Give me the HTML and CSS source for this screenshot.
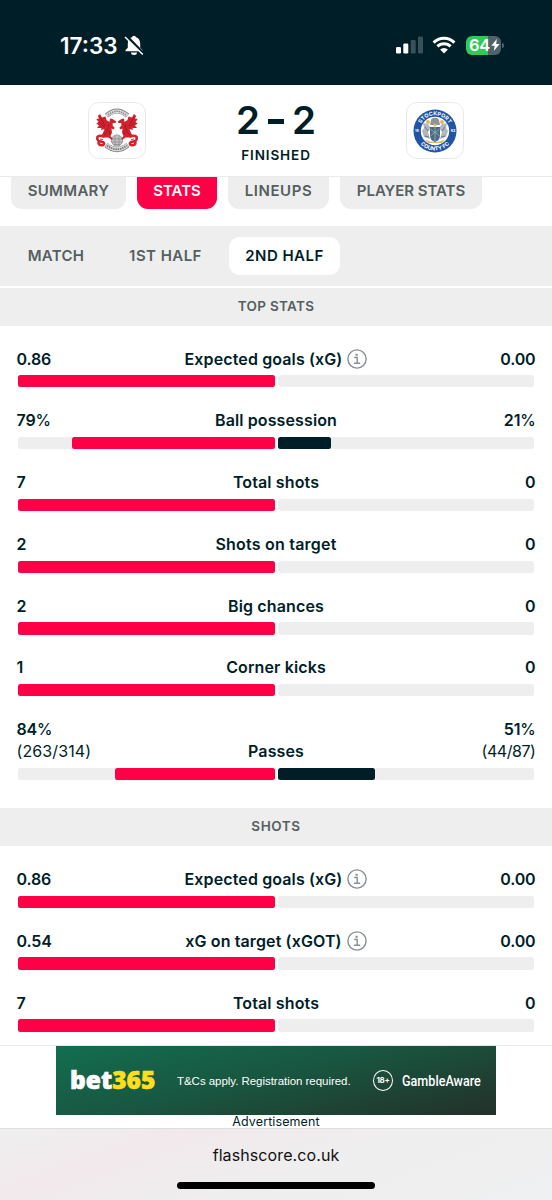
FILE: index.html
```
<!DOCTYPE html>
<html lang="en">
<head>
<meta charset="utf-8">
<title>Match stats</title>
<link rel="stylesheet" href="styles.css">
</head>
<body>
<div class="screen">
  <header class="status">
    <div class="clock"><span class="time">17:33</span>
      <svg class="bell" width="20" height="21" viewBox="0 0 20 21"><path d="M1.500 16.300V15l2.300-2.300V8.800C3.800 5.300 5.500 3 7.900 2.300a2.200 2.200 0 0 1 4.200 0C14.500 3 16.200 5.300 16.200 8.800v3.900l2.300 2.300v1.300zM7 17.600h6a3 2.500 0 0 1-6 0z" fill="#fff"/><path d="M2 .8l17.400 17.800" stroke="#001e28" stroke-width="3.200"/><path d="M1 2l17.800 17.500" stroke="#fff" stroke-width="1.500"/></svg>
    </div>
    <div class="indicators">
      <svg class="signal" width="28" height="18" viewBox="0 0 28 18"><g fill="#fff"><rect x="0" y="11" width="5" height="6.500" rx="1.300"/><rect x="7.300" y="7.500" width="5" height="10" rx="1.300"/><g opacity=".22"><rect x="14.700" y="4" width="5" height="13.500" rx="1.300"/><rect x="22" y="0.500" width="5" height="17" rx="1.300"/></g></g></svg>
      <svg class="wifi" width="24" height="18" viewBox="0 0 24 18"><g fill="none" stroke="#fff" stroke-width="3"><path d="M1.600 6.600a14.700 14.700 0 0 1 20.800 0"/><path d="M5.400 10.400a9.300 9.300 0 0 1 13.200 0"/></g><path d="M12 17.500l-3.900-3.900a5.600 5.600 0 0 1 7.800 0z" fill="#fff"/></svg>
      <div class="battery"><span>64</span><svg width="9" height="12" viewBox="0 0 9 12"><path d="M5.800 0L.4 6.700h3.300L2.800 12 8.600 4.900H5.200z" fill="#fff"/></svg><i class="nub"></i></div>
    </div>
  </header>

  <section class="match">
    <div class="crest">
      <svg width="46" height="46" viewBox="0 0 46 46">
        <path d="M12.500 7.500Q23-1.500 33.500 7.500" fill="none" stroke="#888" stroke-width="5"/>
        <path d="M13 7.500Q23-1 33 7.500" fill="none" stroke="#e2e2e2" stroke-width="3.600"/>
        <path d="M14 7Q23-.5 32 7" fill="none" stroke="#888" stroke-width="1.600" stroke-dasharray="1.500 .8"/>
        <path d="M12 37Q23 46 34 37" fill="none" stroke="#888" stroke-width="5.200"/>
        <path d="M12.500 37Q23 45.500 33.500 37" fill="none" stroke="#ddd" stroke-width="3.800"/>
        <path d="M13 37.500Q23 45 33 37.500" fill="none" stroke="#777" stroke-width="1.800" stroke-dasharray="1.500 .8"/>
        <circle cx="23" cy="32.500" r="5.600" fill="#c4c4c4" stroke="#888" stroke-width=".8"/>
        <path d="M18 31h10M17.800 34h10.400M20 36.500h6M21 28v9M25 28v9" stroke="#888" stroke-width=".7"/>
        <g id="dragon">
          <path d="M6 6L8 9.500 11.500 8.500 12.500 12 15.500 14 16 10.500 18.500 11 22.300 13.500 21.500 15 18.800 15 18.500 17.500 20.500 19.500 20 21.500 17.500 20.500 18 24.500 16.500 28 18.500 30.500 18 32 14.500 29.500 10.500 29.500 6.500 28.500 9 25 10.500 21 7 22 7.500 20 3 20 5 17.500 2.300 15.500 4.500 14 2.300 11 5 10.500 3.800 8z" fill="#d3222e"/>
          <path d="M9.500 28.500C5 27 2.500 28 3.500 31.500S9 32.500 10 35 5.500 38.500 4.500 35" fill="none" stroke="#d3222e" stroke-width="2.600" stroke-linecap="round"/>
          <path d="M6.500 9.500L11 18M5 14l5.500 5M14.500 16.500c1.500 4-3 8-4 11M15 23l1 4M6 31l3 .5" fill="none" stroke="#8d1a23" stroke-width=".8"/>
        </g>
        <use href="#dragon" transform="matrix(-1 0 0 1 46 0)"/>
      </svg>
    </div>
    <div class="result">
      <div class="score"><span>2</span><i class="dash"></i><span>2</span></div>
      <div class="state">FINISHED</div>
    </div>
    <div class="crest">
      <svg width="46" height="46" viewBox="0 0 46 46">
        <defs><path id="arcTop" d="M7.400 23a15.600 15.600 0 0 1 31.200 0"/><path id="arcBottom" d="M3.500 23a19.500 19.500 0 0 0 39 0"/></defs>
        <circle cx="23" cy="23" r="21.500" fill="#2055a4"/>
        <circle cx="23" cy="23" r="14.200" fill="#fff"/>
        <g fill="#b4b6be"><path d="M11 15l5 1 3 4-3 4 2 7-6-2-2-6 2-3z"/><path d="M35 15l-5 1-3 4 3 4-2 7 6-2 2-6-2-3z"/></g>
        <path d="M18 19h10v8c0 4-2 6-5 7-3-1-5-3-5-7z" fill="#466c8c"/>
        <path d="M18.500 21l4.500 4 4.500-4M18.500 28l4.500-4 4.500 4M23 19v14" stroke="#9fae90" stroke-width=".9" fill="none"/>
        <path d="M19 12c1-3 7-3 8 0l1 5H18z" fill="#8d939c"/>
        <g fill="#dbb862"><circle cx="16" cy="14" r="2"/><circle cx="30" cy="14" r="2"/><path d="M13 31.500q10 5 20 0l-3 3.500H16z"/><circle cx="23" cy="17" r="1.500"/></g>
        <path d="M13 19l3 4M33 19l-3 4M13 28l4 1M33 28l-4 1" stroke="#77747d" stroke-width="1"/>
        <g class="ring"><text><textPath href="#arcTop" startOffset="50%">STOCKPORT</textPath></text><text><textPath href="#arcBottom" startOffset="50%">COUNTY FC</textPath></text><text class="year" x="5" y="24.300">18</text><text class="year" x="41" y="24.300">83</text></g>
      </svg>
    </div>
  </section>

  <nav class="tabs"><span class="tab summary">SUMMARY</span><span class="tab stats">STATS</span><span class="tab lineups">LINEUPS</span><span class="tab players">PLAYER STATS</span></nav>
  <nav class="periods"><span class="period full">MATCH</span><span class="period first">1ST HALF</span><span class="period second">2ND HALF</span></nav>

  <main class="content">
    <h2>TOP STATS</h2>
    <div class="row"><div class="line"><b>0.86</b><strong class="xg">Expected goals (xG) <svg class="info" viewBox="0 0 20 20"><circle cx="10" cy="10" r="9.100"/><path d="M7.200 8.500h3v5.700M7 14.200h6.200"/><path class="dot" d="M8.500 4.800h2.200v2H8.500z"/></svg></strong><b>0.00</b></div><div class="bars"><div><i style="width:100%"></i></div><div></div></div></div>
    <div class="row"><div class="line"><b>79<span class="pct">%</span></b><strong>Ball possession</strong><b>21<span class="pct">%</span></b></div><div class="bars"><div><i style="width:79%"></i></div><div><i style="width:21%"></i></div></div></div>
    <div class="row"><div class="line"><b>7</b><strong>Total shots</strong><b>0</b></div><div class="bars"><div><i style="width:100%"></i></div><div></div></div></div>
    <div class="row"><div class="line"><b>2</b><strong class="wide">Shots on target</strong><b>0</b></div><div class="bars"><div><i style="width:100%"></i></div><div></div></div></div>
    <div class="row"><div class="line"><b>2</b><strong>Big chances</strong><b>0</b></div><div class="bars"><div><i style="width:100%"></i></div><div></div></div></div>
    <div class="row"><div class="line"><b>1</b><strong>Corner kicks</strong><b>0</b></div><div class="bars"><div><i style="width:100%"></i></div><div></div></div></div>
    <div class="row passes"><div class="line"><b>84<span class="pct">%</span><small>(263/314)</small></b><strong>Passes</strong><b>51<span class="pct">%</span><small class="tight">(44/87)</small></b></div><div class="bars"><div><i style="width:62.200%"></i></div><div><i style="width:38%"></i></div></div></div>
    <h2>SHOTS</h2>
    <div class="row"><div class="line"><b>0.86</b><strong class="xg">Expected goals (xG) <svg class="info" viewBox="0 0 20 20"><circle cx="10" cy="10" r="9.100"/><path d="M7.200 8.500h3v5.700M7 14.200h6.200"/><path class="dot" d="M8.500 4.800h2.200v2H8.500z"/></svg></strong><b>0.00</b></div><div class="bars"><div><i style="width:100%"></i></div><div></div></div></div>
    <div class="row"><div class="line"><b>0.54</b><strong class="xg">xG on target (xGOT) <svg class="info" viewBox="0 0 20 20"><circle cx="10" cy="10" r="9.100"/><path d="M7.200 8.500h3v5.700M7 14.200h6.200"/><path class="dot" d="M8.500 4.800h2.200v2H8.500z"/></svg></strong><b>0.00</b></div><div class="bars"><div><i style="width:100%"></i></div><div></div></div></div>
    <div class="row"><div class="line"><b>7</b><strong>Total shots</strong><b>0</b></div><div class="bars"><div><i style="width:100%"></i></div><div></div></div></div>
  </main>

  <aside class="ad">
    <div class="banner"><span class="brand">bet<em>365</em></span><span class="terms">T&amp;Cs apply. Registration required.</span><span class="age">18+</span><span class="aware">GambleAware</span></div>
    <div class="caption">Advertisement</div>
  </aside>
  <footer class="browser"><span class="address">flashscore.co.uk</span><i class="home"></i></footer>
</div>
</body>
</html>
```
FILE: styles.css
```
* { box-sizing: border-box; }
body { margin: 0; background: #fff; color: #001e28; font-family: Inter, "Liberation Sans", sans-serif; }
.screen { width: 552px; height: 1200px; display: flex; flex-direction: column; overflow: hidden; }
.screen > * { flex-shrink: 0; }
i, em { font-style: normal; }
svg { display: block; }

.status { height: 85px; background: #001e28; color: #fff; display: flex; justify-content: space-between; padding: 33px 51px 0 60px; }
.clock { display: flex; height: 24px; align-items: center; }
.time { width: 64px; font-size: 22.500px; font-weight: 600; letter-spacing: 0; white-space: nowrap; }
.indicators { display: flex; height: 24px; align-items: center; }
.signal { margin-right: 8px; }
.wifi { margin-right: 10px; }
.battery { position: relative; width: 35px; height: 19px; border-radius: 6px; background: linear-gradient(90deg, #34c759 64%, #4e626a 64%); display: flex; align-items: center; padding-left: 3px; font-size: 16.500px; font-weight: 600; letter-spacing: -.3px; }
.battery svg { margin-left: 1px; }
.nub { position: absolute; right: -3px; top: 7px; width: 2px; height: 5px; border-radius: 0 2px 2px 0; background: #4e626a; }

.match { height: 92px; border-bottom: 1px solid #e9eaec; display: flex; justify-content: space-between; padding: 17px 88px 0; }
.crest { width: 58px; height: 57px; border: 1px solid #e8eaec; border-radius: 11px; display: flex; align-items: center; justify-content: center; }
.result { text-align: center; }
.score { display: flex; align-items: center; justify-content: center; height: 36px; font-size: 38.500px; font-weight: 600; line-height: 36px; }
.dash { width: 16px; height: 5px; background: #001e28; margin: 2px 8px 0; }
.state { margin-top: 8px; font-size: 13.500px; line-height: 18px; font-weight: 600; letter-spacing: .9px; }
.ring { fill: #fff; font-family: Inter, sans-serif; font-size: 5.400px; font-weight: 700; text-anchor: middle; }
.ring .year { font-size: 3.500px; }

.tabs { height: 49px; display: flex; gap: 11px; padding-left: 11px; }
.tab { height: 32px; padding-top: 3px; background: #eee; border-radius: 0 0 11px 11px; color: #555e61; font-size: 15px; line-height: 21px; font-weight: 600; letter-spacing: .3px; text-align: center; white-space: nowrap; }
.summary { width: 115px; }
.stats { width: 80px; background: #ff0046; color: #fff; letter-spacing: 0; }
.lineups { width: 101px; letter-spacing: .55px; }
.players { width: 142px; letter-spacing: -.05px; }
.periods { height: 60px; background: #eee; display: flex; align-items: center; }
.period { height: 38px; line-height: 38px; color: #555e61; font-size: 15px; font-weight: 600; letter-spacing: .45px; text-align: center; white-space: nowrap; }
.full { width: 112px; letter-spacing: .3px; }
.first { width: 107px; }
.second { width: 111px; margin-left: 10px; border-radius: 11px; background: #fff; color: #001e28; }

.content { height: 759px; padding-top: 1.500px; }
h2 { margin: 0; height: 38.500px; background: #eee; color: #555e61; font-size: 13.500px; line-height: 37px; font-weight: 600; letter-spacing: .3px; text-align: center; }
.row ~ h2 { letter-spacing: .6px; }
.row { height: 61.800px; padding: 21.500px 18px 0; display: flex; flex-direction: column; gap: 5.700px; }
.line { display: grid; grid-template-columns: 1fr auto 1fr; align-items: end; height: 22px; line-height: 22px; font-size: 16px; }
.line b, .line strong { font-weight: 600; letter-spacing: .12px; }
.line b { margin: 0 -1.500px; letter-spacing: -.15px; }
.line .wide { letter-spacing: .22px; }
.line b:last-child { text-align: right; }
.line small { display: block; font-size: 16px; font-weight: 400; letter-spacing: .1px; }
.line .tight { letter-spacing: -.45px; }
.pct { font-size: 15.500px; line-height: 1; font-weight: 500; }
.line .xg { display: flex; gap: 5px; align-items: center; }
.info { width: 20px; height: 20px; fill: none; stroke: #888f91; stroke-width: 1.400; }
.info .dot { fill: #888f91; stroke: none; }
.bars { display: grid; grid-template-columns: 1fr 1fr; gap: 3px; }
.bars div { height: 12.300px; border-radius: 2.500px; background: #eee; display: flex; }
.bars div:first-child { justify-content: flex-end; }
.bars i { border-radius: 2.500px; background: #001e28; }
.bars div:first-child i { background: #ff0046; }
.passes { height: 111.200px; }
.passes .line { height: 44px; }

.ad { height: 83px; border-top: 1px solid #e6e8e9; display: flex; flex-direction: column; align-items: center; }
.banner { width: 440px; height: 69px; background: linear-gradient(166deg, #126e50 0%, #195540 48%, #243029 100%); display: flex; align-items: center; padding-left: 14px; color: #fff; white-space: nowrap; }
.brand { width: 107px; margin-top: -3px; font-family: "Open Sans", sans-serif; font-size: 24.500px; font-weight: 800; letter-spacing: 0; -webkit-text-stroke: .6px currentColor; }
.brand em { color: #ffdf1b; }
.terms { width: 196px; font-family: "Liberation Sans", sans-serif; font-size: 11.500px; letter-spacing: -.04px; }
.age { width: 20px; height: 21px; border: 1.500px solid #fff; border-radius: 50%; text-align: center; font-size: 8px; line-height: 19px; font-weight: 700; letter-spacing: -.3px; }
.aware { margin-left: 9px; font-family: Roboto, sans-serif; font-size: 15px; font-weight: 500; transform: scaleX(.84); transform-origin: left; }
.caption { font-size: 12.500px; line-height: 13px; letter-spacing: .1px; }
.browser { height: 72px; border-top: 1px solid #dedfe0; background: linear-gradient(160deg, #efeff0 0%, #f1e9eb 25%, #efeeef 55%, #eff0f1 100%); color: #111; display: flex; flex-direction: column; align-items: center; padding-top: 14px; }
.address { font-size: 16px; line-height: 24px; letter-spacing: .1px; }
.home { width: 198px; height: 7px; border-radius: 4px; background: #000; margin-top: 15px; }
```
